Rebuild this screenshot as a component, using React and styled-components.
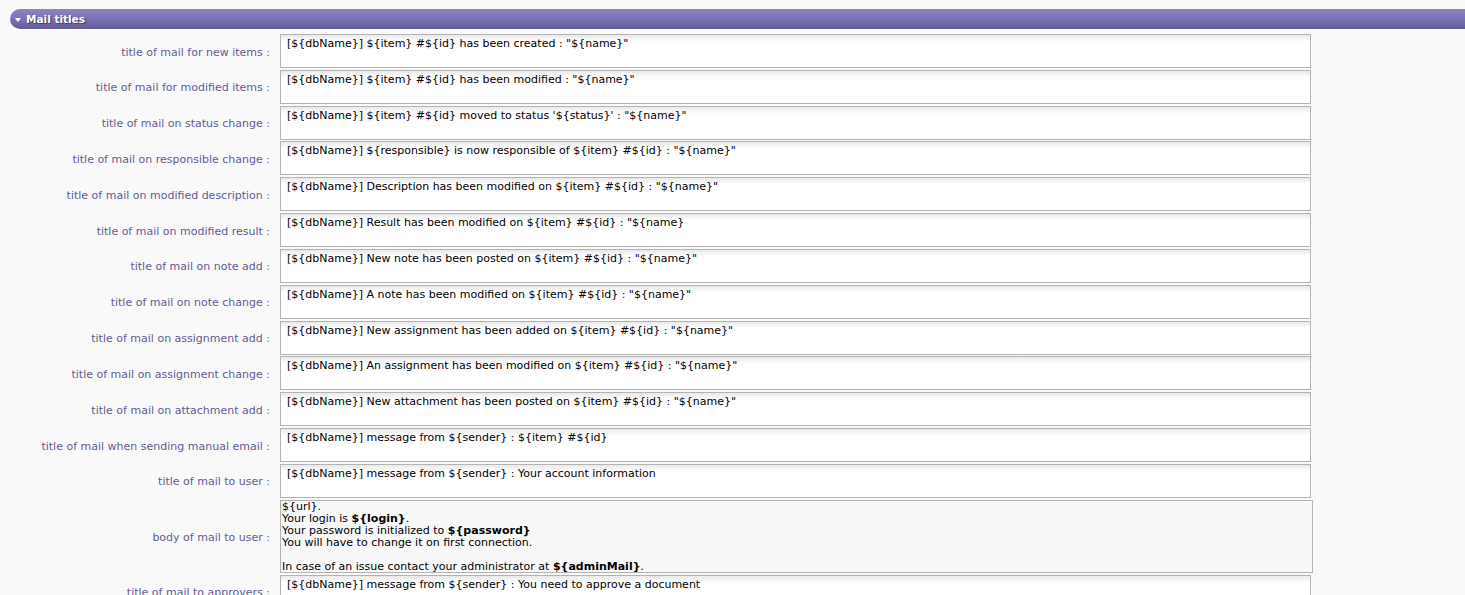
import React from "react";
import styled, { createGlobalStyle } from "styled-components";

const Global = createGlobalStyle`
  html, body { margin: 0; padding: 0; background: #f9f9f9; }
  body { font-family: "DejaVu Sans", Verdana, sans-serif; overflow: hidden; }
`;

const Page = styled.div`
  padding: 9px 0 0 10px;
`;

const SectionHeader = styled.div`
  height: 20px;
  display: flex;
  align-items: center;
  gap: 5px;
  padding-left: 5px;
  border-radius: 10px 0 0 10px;
  background: linear-gradient(to bottom, #8a83c6 0%, #7a72b6 50%, #625b95 100%);
  color: #fff;
  font-size: 10.5px;
  line-height: 12px;
  font-weight: bold;
  text-shadow: 1px 1px 1px #3d3766;
`;

const Caret = styled.span`
  width: 0;
  height: 0;
  border-left: 3px solid transparent;
  border-right: 3px solid transparent;
  border-top: 4px solid #fff;
  margin-top: 1px;
`;

const Form = styled.div`
  display: grid;
  grid-template-columns: 263px auto;
  column-gap: 7px;
  row-gap: 1.83px;
  margin-top: 5px;
  align-items: center;
  justify-content: start;
`;

const Label = styled.div`
  text-align: right;
  font-size: 11px;
  line-height: 13px;
  padding: 2px 3px 0 0;
  color: #635b94;
  white-space: nowrap;
`;

const Field = styled.div`
  box-sizing: border-box;
  width: ${(p) => (p.$wide ? "1033px" : "1031px")};
  height: ${(p) => (p.$tall ? "73px" : "34px")};
  border: 1px solid #b3b3b3;
  background: ${(p) =>
    p.$tall ? "#f8f8f8" : "linear-gradient(to bottom, #e9e9e9 0px, #fdfdfd 6px, #fff 10px)"};
  padding: ${(p) => (p.$tall ? "0 1px" : "2px 6px")};
  font-size: 11px;
  line-height: ${(p) => (p.$tall ? "12px" : "13px")};
  color: #000;
  white-space: pre;
  overflow: hidden;
`;

const rows = [
  ["title of mail for new items :", '[${dbName}] ${item} #${id} has been created : "${name}"'],
  ["title of mail for modified items :", '[${dbName}] ${item} #${id} has been modified : "${name}"'],
  ["title of mail on status change :", "[${dbName}] ${item} #${id} moved to status '${status}' : \"${name}\""],
  ["title of mail on responsible change :", '[${dbName}] ${responsible} is now responsible of ${item} #${id} : "${name}"'],
  ["title of mail on modified description :", '[${dbName}] Description has been modified on ${item} #${id} : "${name}"'],
  ["title of mail on modified result :", '[${dbName}] Result has been modified on ${item} #${id} : "${name}'],
  ["title of mail on note add :", '[${dbName}] New note has been posted on ${item} #${id} : "${name}"'],
  ["title of mail on note change :", '[${dbName}] A note has been modified on ${item} #${id} : "${name}"'],
  ["title of mail on assignment add :", '[${dbName}] New assignment has been added on ${item} #${id} : "${name}"'],
  ["title of mail on assignment change :", '[${dbName}] An assignment has been modified on ${item} #${id} : "${name}"'],
  ["title of mail on attachment add :", '[${dbName}] New attachment has been posted on ${item} #${id} : "${name}"'],
  ["title of mail when sending manual email :", "[${dbName}] message from ${sender} : ${item} #${id}"],
  ["title of mail to user :", "[${dbName}] message from ${sender} : Your account information"],
];

export default function App() {
  return (
    <Page>
      <Global />
      <SectionHeader>
        <Caret />
        Mail titles
      </SectionHeader>
      <Form>
        {rows.map(([l, v]) => (
          <React.Fragment key={l}>
            <Label>{l}</Label>
            <Field>{v}</Field>
          </React.Fragment>
        ))}
        <Label>body of mail to user :</Label>
        <Field $tall $wide>
          {"${url}.\nYour login is "}
          <b>{"${login}"}</b>
          {".\nYour password is initialized to "}
          <b>{"${password}"}</b>
          {"\nYou will have to change it on first connection.\n\nIn case of an issue contact your administrator at "}
          <b>{"${adminMail}"}</b>
          {"."}
        </Field>
        <Label>title of mail to approvers :</Label>
        <Field>{"[${dbName}] message from ${sender} : You need to approve a document"}</Field>
      </Form>
    </Page>
  );
}
